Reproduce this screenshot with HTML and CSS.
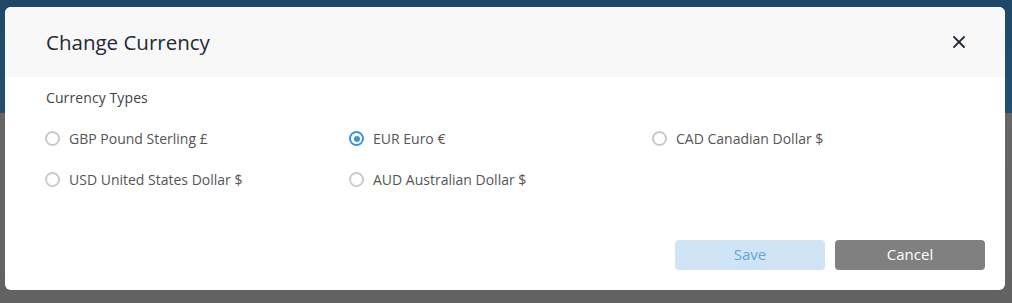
FILE: index.html
```html
<!DOCTYPE html>
<html lang="en">
<head>
<meta charset="utf-8">
<title>Change Currency</title>
<link rel="stylesheet" href="styles.css">
</head>
<body>
<div class="modal">
  <div class="modal-header">
    <h2 class="modal-title">Change Currency</h2>
    <button class="close-btn" aria-label="Close">
      <svg width="12" height="12" viewBox="0 0 12 12"><path d="M1 1L11 11M11 1L1 11" stroke="#1e2a36" stroke-width="1.8" stroke-linecap="square" fill="none"/></svg>
    </button>
  </div>
  <div class="modal-body">
    <div class="section-label">Currency Types</div>
    <div class="options">
      <label class="option"><span class="radio"></span><span>GBP Pound Sterling £</span></label>
      <label class="option"><span class="radio checked"></span><span>EUR Euro €</span></label>
      <label class="option"><span class="radio"></span><span>CAD Canadian Dollar $</span></label>
      <label class="option"><span class="radio"></span><span>USD United States Dollar $</span></label>
      <label class="option"><span class="radio"></span><span>AUD Australian Dollar $</span></label>
    </div>
  </div>
  <div class="modal-footer">
    <button class="btn btn-save">Save</button>
    <button class="btn btn-cancel">Cancel</button>
  </div>
</div>
</body>
</html>
```
FILE: styles.css
```css
html, body {
  margin: 0;
  height: 100%;
}
body {
  background: linear-gradient(to bottom, #1f4868 0, #234e70 113px, #666666 113px, #626262 100%);
  padding: 7px 0 0 5px;
  box-sizing: border-box;
  font-family: "Open Sans", "Noto Sans", sans-serif;
}
.modal {
  width: 1000px;
  height: 283px;
  background: #ffffff;
  border-radius: 6px;
  overflow: hidden;
  display: flex;
  flex-direction: column;
}
.modal-header {
  height: 70px;
  background: #f8f8f8;
  display: flex;
  align-items: center;
  justify-content: space-between;
  padding: 0 40px 0 41px;
  flex-shrink: 0;
}
.modal-title {
  margin: 0;
  font-size: 20.5px;
  font-weight: 400;
  color: #1e2a36;
  line-height: 28px;
}
.close-btn {
  border: 0;
  background: none;
  padding: 0;
  width: 12px;
  height: 12px;
  display: flex;
  cursor: pointer;
}
.modal-body {
  padding: 11px 41px 0 40px;
  flex: 1;
}
.section-label {
  font-size: 14px;
  line-height: 20px;
  color: #444;
  padding-left: 1px;
  letter-spacing: 0.1px;
}
.options {
  display: grid;
  grid-template-columns: 304px 303px 1fr;
  grid-auto-rows: 41px;
  margin-top: 10px;
  align-items: center;
}
.option {
  display: flex;
  align-items: center;
  gap: 9px;
  font-size: 14px;
  color: #555;
  line-height: 20px;
}
.radio {
  width: 15px;
  height: 15px;
  box-sizing: border-box;
  border: 2px solid #c9c8d2;
  border-radius: 50%;
  flex-shrink: 0;
  background: #fff;
  position: relative;
}
.radio.checked {
  border-color: #3996db;
}
.radio.checked::after {
  content: "";
  position: absolute;
  left: 2.5px;
  top: 2.5px;
  width: 6px;
  height: 6px;
  border-radius: 50%;
  background: #3996db;
}
.modal-footer {
  display: flex;
  justify-content: flex-end;
  gap: 10px;
  padding: 0 20px 20px;
}
.btn {
  width: 150px;
  height: 30px;
  border: 0;
  border-radius: 4px;
  font-family: "Open Sans", "Noto Sans", sans-serif;
  font-size: 15px;
  line-height: 28px;
  padding: 0 0 2px;
  cursor: pointer;
}
.btn-save {
  background: #cfe5f6;
  color: #5aa8de;
}
.btn-cancel {
  background: #808080;
  color: #ffffff;
}
```
